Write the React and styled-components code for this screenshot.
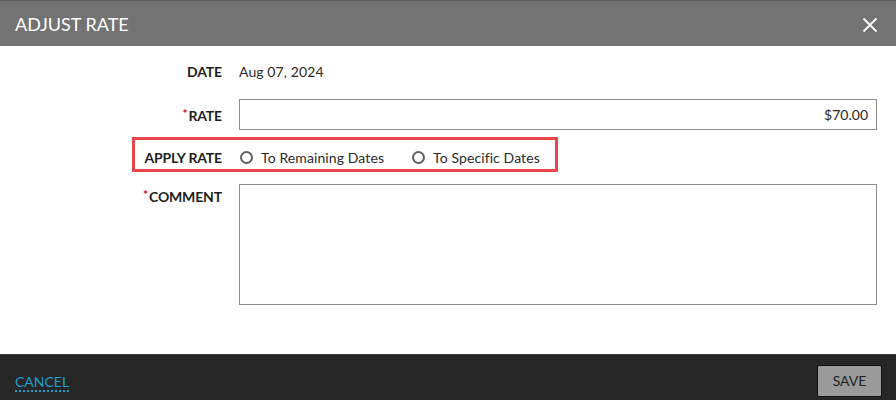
import styled, { createGlobalStyle } from "styled-components";

const GlobalStyle = createGlobalStyle`
  html, body {
    margin: 0;
    padding: 0;
    height: 100%;
  }
  body {
    font-family: Lato, "Open Sans", sans-serif;
    color: #222;
  }
  #root {
    height: 100%;
  }
`;

function CloseIcon() {
  return (
    <svg width="16" height="16" viewBox="0 0 16 16">
      <path d="M1.5 1.5 L14.5 14.5 M14.5 1.5 L1.5 14.5" stroke="#fff" strokeWidth="1.8" fill="none" />
    </svg>
  );
}

function App() {
  return (
    <>
      <GlobalStyle />
      <Dialog>
        <Header>
          <Title>ADJUST RATE</Title>
          <CloseButton aria-label="Close">
            <CloseIcon />
          </CloseButton>
        </Header>
        <Body>
          <Row>
            <Label>DATE</Label>
            <Value>Aug 07, 2024</Value>
          </Row>
          <Row>
            <Label>
              <Required>*</Required>RATE
            </Label>
            <RateInput defaultValue="$70.00" />
          </Row>
          <Row $height="30px">
            <Highlight />
            <Label>APPLY RATE</Label>
            <RadioGroup>
              <RadioOption>
                <Radio />
                To Remaining Dates
              </RadioOption>
              <RadioOption>
                <Radio />
                To Specific Dates
              </RadioOption>
            </RadioGroup>
          </Row>
          <Row $align="flex-start">
            <Label $top="3px">
              <Required>*</Required>COMMENT
            </Label>
            <Comment />
          </Row>
        </Body>
        <Footer>
          <CancelLink href="#">CANCEL</CancelLink>
          <SaveButton>SAVE</SaveButton>
        </Footer>
      </Dialog>
    </>
  );
}

const Dialog = styled.div`
  display: flex;
  flex-direction: column;
  height: 100%;
  background: #fff;
`;

const Header = styled.div`
  display: flex;
  align-items: center;
  justify-content: space-between;
  height: 45px;
  padding: 0 18px 0 15px;
  background-color: #737373;
  border-top: 1px solid #5a5a5a;
`;

const Title = styled.h1`
  margin: 0;
  color: #fff;
  font-size: 18px;
  font-weight: 400;
`;

const CloseButton = styled.button`
  display: flex;
  padding: 0;
  margin-top: 2px;
  background: none;
  border: none;
  cursor: pointer;
`;

const Body = styled.div`
  flex: 1;
  display: flex;
  flex-direction: column;
  gap: 12px;
  padding: 10px 19px 0 15px;
`;

const Row = styled.div`
  position: relative;
  display: flex;
  align-items: ${(p) => p.$align || "center"};
  gap: 17px;
  min-height: ${(p) => p.$height || "31px"};
`;

const Label = styled.div`
  flex: 0 0 207px;
  margin-top: ${(p) => p.$top || "0"};
  text-align: right;
  font-size: 14px;
  font-weight: 700;
  letter-spacing: -0.15px;
  color: #1e1e1e;
`;

const Required = styled.span`
  color: #d0021b;
  font-size: 12px;
  vertical-align: 3px;
  margin-right: 1px;
`;

const Value = styled.div`
  font-size: 14px;
  color: #2a2a2a;
  letter-spacing: 0.1px;
`;

const RateInput = styled.input`
  flex: 1;
  box-sizing: border-box;
  height: 31px;
  padding: 0 8px;
  border: 1px solid #8c8c8c;
  border-radius: 0;
  text-align: right;
  font-family: Lato, "Open Sans", sans-serif;
  font-size: 14px;
  color: #2a2a2a;
  outline: none;
`;

const Highlight = styled.div`
  position: absolute;
  left: 117px;
  top: -5px;
  width: 426px;
  height: 35px;
  box-sizing: border-box;
  border: 3px solid #e8464a;
  pointer-events: none;
`;

const RadioGroup = styled.div`
  display: flex;
  align-items: center;
  gap: 28px;
  margin-left: 1px;
`;

const RadioOption = styled.label`
  display: flex;
  align-items: center;
  gap: 8px;
  font-size: 14px;
  letter-spacing: 0.1px;
  color: #2a2a2a;
`;

const Radio = styled.span`
  display: inline-block;
  box-sizing: border-box;
  width: 13px;
  height: 13px;
  border: 2px solid #606060;
  border-radius: 50%;
`;

const Comment = styled.textarea`
  flex: 1;
  box-sizing: border-box;
  height: 121px;
  border: 1px solid #8c8c8c;
  border-radius: 0;
  resize: none;
  outline: none;
  font-family: Lato, "Open Sans", sans-serif;
`;

const Footer = styled.div`
  display: flex;
  align-items: center;
  justify-content: space-between;
  height: 46px;
  padding: 6px 14px 0 15px;
  box-sizing: border-box;
  background-color: #262626;
  border-top: 1px solid #3c3c3c;
`;

const CancelLink = styled.a`
  color: #1b9fd1;
  font-size: 14px;
  text-decoration: none;
  border-bottom: 2px dotted #1b9fd1;
  line-height: 16px;
  margin-top: 4px;
`;

const SaveButton = styled.button`
  width: 65px;
  height: 32px;
  background-color: #9a9a9a;
  border: 1px solid #111;
  border-radius: 2px;
  color: #222;
  font-family: Lato, "Open Sans", sans-serif;
  font-size: 14px;
  cursor: pointer;
`;

export default App;
